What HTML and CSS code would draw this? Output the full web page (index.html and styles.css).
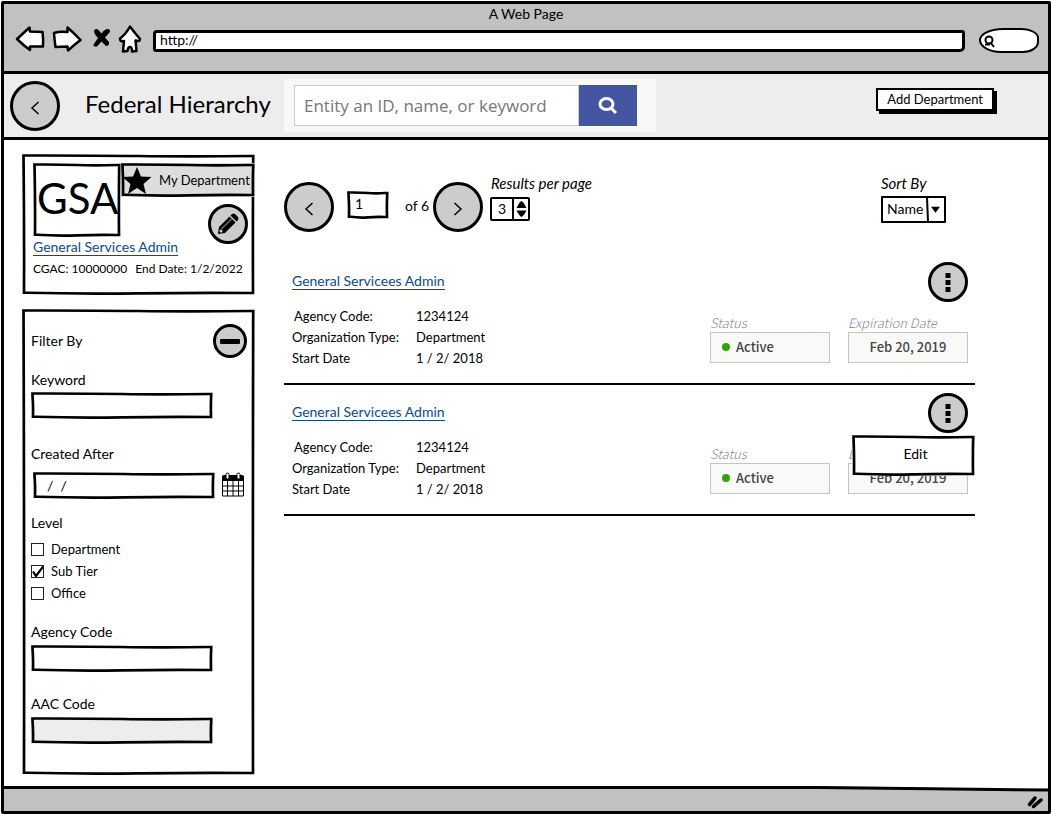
FILE: index.html
```html
<!DOCTYPE html>
<html lang="en">
<head>
<meta charset="utf-8">
<title>Federal Hierarchy</title>
<link rel="stylesheet" href="styles.css">
</head>
<body>
<div class="window">
  <div class="chrome">
    <div class="chrome-title">A Web Page</div>
    <div class="toolbar">
      <div class="nav-icons">
        <button type="button" class="plain" aria-label="Back"><svg width="30" height="28" viewBox="0 0 30 28"><path d="M2 14 14.500 2.500 15 6.500 27.500 7Q28.500 14 28 21.500L15 21.500 15 25Q8 20 2 14Z" class="ink-outline"/></svg></button>
        <button type="button" class="plain" aria-label="Forward"><svg width="30" height="28" viewBox="0 0 30 28"><path d="M2 8Q8 6 15.500 7L15.500 2.500Q22 8 28.500 15Q22 20 16 25.500L15.500 21.500 3.500 22Q2.500 15 2 8Z" class="ink-outline"/></svg></button>
        <button type="button" class="plain stop" aria-label="Stop"><svg width="18" height="22" viewBox="0 0 18 22"><path d="M1 3Q2 0 5 1.500L8.500 5.500Q11.500 1 15 1Q18 1.500 16.500 4.500L12 9.500 16 14Q16.500 18 13 18L8.500 13.500 4 18.500Q0 19 .5 16.500L5 10Q1 6 1 3Z"/></svg></button>
        <button type="button" class="plain" aria-label="Home"><svg width="24" height="30" viewBox="0 0 24 30"><path d="M12 2.500Q16 8 22 15Q22 18 17.500 16.500L18.500 27 14 27.500Q14 23 12 23T9.500 27L5 27.500 6 17Q2 18 2 14.500Q8 10 12 2.500Z" class="ink-outline"/></svg></button>
      </div>
      <input class="address" type="text" value="http://" aria-label="Address">
      <label class="quick-search">
        <svg width="13" height="14" viewBox="0 0 13 14"><circle cx="6" cy="6" r="3.500" class="ink-line"/><path d="M7.500 8.500 11 13M2 10.500H7" class="ink-line"/></svg>
        <input type="text" aria-label="Browser search">
      </label>
    </div>
  </div>

  <header class="header">
    <button type="button" class="round large" aria-label="Go back"><svg width="12" height="14" viewBox="0 0 12 14"><path d="M9.500 1 3 7l6.500 6" class="chevron"/></svg></button>
    <h1>Federal Hierarchy</h1>
    <form class="search-panel">
      <input type="search" placeholder="Entity an ID, name, or keyword" aria-label="Search entities">
      <button type="button" aria-label="Search"><svg width="22" height="18" viewBox="0 0 22 18"><ellipse cx="9.500" cy="7" rx="6.500" ry="5.500"/><path d="m14 11 5 5"/></svg></button>
    </form>
    <button type="button" class="add-button">Add Department</button>
  </header>

  <main class="content">
    <aside class="sidebar">
      <section class="sketch org-card">
        <div class="org-top">
          <div>
            <div class="sketch logo">GSA</div>
            <a href="#" class="link">General Services Admin</a>
          </div>
          <div class="org-side">
            <div class="sketch my-dept"><svg width="30" height="29" viewBox="0 0 30 29"><path d="m15 1 4 9.500 10.500.5-8 7L24 28l-9-6-9 6 2.500-10-8-7L11 10.500Z"/></svg>My Department</div>
            <button type="button" class="round medium" aria-label="Edit department"><svg width="22" height="22" viewBox="0 0 22 22"><path d="m1 21 1-7L12.500 3.500l6 6L8 20Z"/><path d="m13.500 2.500 1.500-1.500q1.500-1 3 0L21 4q1 1.500 0 3l-1.500 1.500Z"/><path d="m4.500 16 10-10" class="pencil-cut"/><circle cx="4" cy="18" r="1.500" fill="#ccc"/></svg></button>
          </div>
        </div>
        <p class="org-meta"><span>CGAC: 10000000</span><span>End Date: 1/2/2022</span></p>
      </section>

      <form class="sketch filters">
        <div class="filter-head">
          <h2>Filter By</h2>
          <button type="button" class="round small" aria-label="Collapse filters"><span class="minus"></span></button>
        </div>
        <div class="field">
          <label for="keyword">Keyword</label>
          <input class="sketch" id="keyword" type="text">
        </div>
        <div class="field date-field">
          <label for="created">Created After</label>
          <div class="date-row">
            <input class="sketch" id="created" type="text" value="/  /">
            <svg width="24" height="25" viewBox="0 0 24 25"><path d="M1 4.500Q1 3 3 3h18q2 0 2 1.500V9H1Z"/><path d="M1.500 8v16h21V8M1.500 14h21M1.500 19h21M6.500 9v15M12 9v15M17.500 9v15" fill="none" stroke="#000"/><rect x="5" y="1" width="3" height="6" rx="1.500" fill="#fff" stroke="#000"/><rect x="16" y="1" width="3" height="6" rx="1.500" fill="#fff" stroke="#000"/></svg>
          </div>
        </div>
        <fieldset>
          <legend>Level</legend>
          <label><input type="checkbox">Department</label>
          <label><input type="checkbox" checked>Sub Tier</label>
          <label><input type="checkbox">Office</label>
        </fieldset>
        <div class="field">
          <label for="agency">Agency Code</label>
          <input class="sketch" id="agency" type="text">
        </div>
        <div class="field">
          <label for="aac">AAC Code</label>
          <input class="sketch" id="aac" type="text" disabled>
        </div>
      </form>
    </aside>

    <section class="results">
      <div class="controls">
        <button type="button" class="round large" aria-label="Previous page"><svg width="12" height="14" viewBox="0 0 12 14"><path d="M9.500 1 3 7l6.500 6" class="chevron"/></svg></button>
        <input class="sketch page-input" type="text" value="1" aria-label="Page">
        <span class="page-total">of 6</span>
        <button type="button" class="round large" aria-label="Next page"><svg width="12" height="14" viewBox="0 0 12 14"><path d="m2.500 1 6.500 6-6.500 6" class="chevron"/></svg></button>
        <div class="option">
          <label for="per-page">Results per page</label>
          <div class="stepper">
            <input id="per-page" type="number" value="3">
            <svg width="13" height="18" viewBox="0 0 13 18"><path d="M1.500 8Q5 1 6.500 1T11.500 8ZM1.500 10.500h10Q8 17 6.500 17T1.500 10.500Z"/></svg>
          </div>
        </div>
        <div class="option sort">
          <label for="sort">Sort By</label>
          <div class="picker">
            <select id="sort"><option>Name</option></select>
          </div>
        </div>
      </div>

      <article class="item">
        <div class="item-main">
          <a href="#" class="link">General Servicees Admin</a>
          <dl>
            <dt class="nudge">Agency Code:</dt><dd>1234124</dd>
            <dt>Organization Type:</dt><dd>Department</dd>
            <dt>Start Date</dt><dd>1 / 2/ 2018</dd>
          </dl>
        </div>
        <div class="item-side">
          <button type="button" class="round medium" aria-label="More actions"><svg width="6" height="20" viewBox="0 0 6 20"><path d="M.5 1h5v5h-5ZM.5 8h5v5h-5ZM.5 15h5v5h-5Z"/></svg></button>
          <div class="facts">
            <div><span class="fact-label">Status</span><div class="fact"><i class="dot"></i>Active</div></div>
            <div><span class="fact-label">Expiration Date</span><div class="fact center">Feb 20, 2019</div></div>
          </div>
        </div>
      </article>

      <article class="item">
        <div class="item-main">
          <a href="#" class="link">General Servicees Admin</a>
          <dl>
            <dt class="nudge">Agency Code:</dt><dd>1234124</dd>
            <dt>Organization Type:</dt><dd>Department</dd>
            <dt>Start Date</dt><dd>1 / 2/ 2018</dd>
          </dl>
        </div>
        <div class="item-side">
          <button type="button" class="round medium" aria-label="More actions"><svg width="6" height="20" viewBox="0 0 6 20"><path d="M.5 1h5v5h-5ZM.5 8h5v5h-5ZM.5 15h5v5h-5Z"/></svg></button>
          <div class="facts">
            <div><span class="fact-label">Status</span><div class="fact"><i class="dot"></i>Active</div></div>
            <div><span class="fact-label">Expiration Date</span><div class="fact center">Feb 20, 2019</div></div>
          </div>
          <button type="button" class="sketch menu">Edit</button>
        </div>
      </article>
    </section>
  </main>

  <footer class="status-bar">
    <svg class="slope" viewBox="0 0 1000 6" preserveAspectRatio="none"><path d="M0 0H780L1000 3.500V0Z" fill="#fff"/><path d="M0 0 780 0 1000 2.500V5.500L780 3H0Z"/></svg>
    <svg class="grip" width="18" height="14" viewBox="0 0 18 14"><path d="M2.500 9.500 8 3M6.500 11.500 14 5" stroke="#000" stroke-width="3.500" stroke-linecap="round"/></svg>
  </footer>
</div>
</body>
</html>
```
FILE: styles.css
```css
* { box-sizing: border-box; }

body {
  margin: 0;
  background: #fff;
  color: #000;
  font: 14px/20px Lato, "Liberation Sans", sans-serif;
}

button, input, select { font: inherit; color: inherit; }
button { cursor: pointer; }
h1, h2, p, dl, dd { margin: 0; }
svg { display: block; }

.window {
  display: flex;
  flex-direction: column;
  min-height: calc(100vh - 2px);
  margin: 1px;
  border: 3px solid #000;
  border-radius: 2px;
}

.sketch {
  border: 4px solid #000;
  border-image: url("data:image/svg+xml,%3Csvg xmlns='http://www.w3.org/2000/svg' width='200' height='100'%3E%3Cpath d='M1.5 1.5 Q60 1.4 100 2 T198.2 2 Q197.700 50 198 98 Q150 97.600 100 98.300 T2 97.700 Q2.300 50 1.500 1.500Z' fill='none' stroke='black' stroke-width='2.7'/%3E%3C/svg%3E") 4 stretch;
}

/* Browser chrome */
.chrome { background: #c1c1c1; border-bottom: 3px solid #000; padding-bottom: 16px; }
.chrome-title { text-align: center; line-height: 19px; }
.toolbar { display: flex; align-items: center; height: 32px; padding: 0 9px 0 11px; }
.nav-icons { display: flex; align-items: center; gap: 7px; margin-right: 11px; }
.plain { padding: 0; border: 0; background: none; }
.stop { margin: 0 0 0 4px; }
.ink-outline { fill: #fff; stroke: #000; stroke-width: 2.5; stroke-linejoin: round; }
.ink-line { fill: none; stroke: #000; stroke-width: 2; }
.address {
  flex: 1;
  min-width: 0;
  height: 22px;
  margin-top: 4px;
  padding: 0 4px 3px;
  border: 3px solid #000;
  border-radius: 4px 3px 5px 3px;
  background: #fff;
}
.quick-search {
  display: flex;
  align-items: center;
  width: 60px;
  height: 25px;
  margin: 3px 0 0 14px;
  padding-left: 2px;
  border: 2px solid #000;
  border-radius: 24px 18px 16px 22px / 12px 10px 11px 13px;
  background: #fff;
}
.quick-search input { width: 36px; padding: 0; border: 0; background: none; }

/* Page header */
.header {
  display: flex;
  align-items: center;
  height: 66px;
  padding-left: 6px;
  background: #ededed;
  border-bottom: 3px solid #000;
}
.round {
  display: grid;
  flex: none;
  place-items: center;
  padding: 0;
  border: 3px solid #000;
  border-radius: 50%;
  background: #ccc;
}
.large { width: 50px; height: 50px; padding-top: 4px; }
.medium { width: 40px; height: 40px; }
.small { width: 34px; height: 34px; }
.chevron { fill: none; stroke: #000; stroke-width: 1.5; }
.minus { width: 20px; height: 5px; border-radius: 1px; background: #000; }

.header h1 { width: 199px; margin-left: 25px; padding-bottom: 4px; font-size: 24px; font-weight: 400; line-height: 28px; white-space: nowrap; }
.search-panel { display: flex; width: 372px; padding: 6px 19px 6px 10px; background: #f8f8f6; }
.search-panel input {
  flex: 1;
  min-width: 0;
  height: 41px;
  padding: 0 9px;
  border: 1px solid #ccccc4;
  border-radius: 0;
  background: #fff;
  font: 17px/20px "Open Sans", "Noto Sans", sans-serif;
}
.search-panel input::placeholder { color: #777; opacity: 1; }
.search-panel button { display: grid; place-items: center; width: 58px; border: 0; background: #4456a1; }
.search-panel svg { fill: none; stroke: #fff; stroke-width: 3; }
.add-button {
  height: 23px;
  margin: 0 54px 12px auto;
  padding: 0 9px;
  border: 2px solid #000;
  background: #fff;
  box-shadow: 3px 3px 0 #000;
  font-size: 13px;
  line-height: 19px;
}

/* Two columns */
.content {
  display: grid;
  flex: 1;
  grid-template-columns: 233px minmax(0, 1fr);
  align-items: start;
  gap: 29px;
  padding: 14px 73px 11px 18px;
}
.sidebar { display: grid; grid-template-columns: minmax(0, 1fr); gap: 14px; }
.link { color: #0e4a8b; line-height: 17px; text-decoration: none; border-bottom: 1px solid #0e4a8b; white-space: nowrap; }

.org-card { height: 141px; padding: 5px 0 0 7px; }
.org-top { display: grid; grid-template-columns: 88px minmax(0, 1fr); }
.logo { display: grid; place-items: center; height: 74px; padding-bottom: 5px; font-size: 42px; }
.org-side { display: grid; justify-items: end; align-content: start; gap: 7px; }
.my-dept { display: flex; align-items: center; justify-self: stretch; gap: 7px; height: 34px; margin-right: -4px; background: #ddd; font-size: 13px; white-space: nowrap; }
.my-dept svg { flex: none; margin-left: -3px; }
.org-side .round { margin-right: 3px; }
.pencil-cut { fill: none; stroke: #ccc; stroke-width: 1; }
.org-meta { display: flex; gap: 8px; margin-top: 2px; font-size: 12px; white-space: nowrap; }

.filters { min-height: 466px; padding: 11px 4px 0 5px; }
.filter-head { display: flex; align-items: center; justify-content: space-between; }
.filter-head h2 { font-size: 14px; font-weight: 400; }
.field { margin-top: 12px; }
.field label { display: block; }
.field input { display: block; width: 182px; height: 27px; margin-top: 2px; padding: 0 10px; background: #fff; white-space: pre; }
.field input:disabled { background: #ededed; }
.date-field { margin-top: 25px; }
.date-row { display: flex; align-items: center; gap: 6px; padding: 6px 0 0 2px; }
.filters fieldset { display: grid; margin: 14px 0 0; padding: 0; border: 0; }
.filters legend { padding: 0 0 5px; }
.filters fieldset label { display: flex; align-items: center; gap: 7px; height: 22px; font-size: 13px; }
.filters fieldset input { appearance: none; width: 13px; height: 13px; margin: 0; border: 1px solid #222; background: #fff; }
.filters fieldset input:checked {
  background: url("data:image/svg+xml,%3Csvg xmlns='http://www.w3.org/2000/svg' width='13' height='13'%3E%3Cpath d='M2 6.500 5 11 12.500 1' fill='none' stroke='black' stroke-width='2.2'/%3E%3C/svg%3E") center no-repeat;
}
.filters fieldset + .field { margin-top: 18px; }
.filters fieldset ~ .field input { margin-top: 3px; }
.filters .field:last-child { margin-top: 22px; }

/* Results */
.results { min-width: 0; }
.controls { display: flex; height: 100px; padding-top: 28px; }
.page-input { width: 42px; height: 28px; margin: 9px 16px 0 13px; padding: 0 4px 3px; }
.page-total { width: 28px; margin-top: 14px; }
.option { margin-left: 7px; }
.option label { display: block; margin: -9px 0 4px 1px; font-size: 15px; font-style: italic; }
.sort { margin: 0 29px 0 auto; }
.option.sort label { margin: -9px 0 3px; }
.stepper { display: flex; align-items: center; width: 40px; height: 24px; border: 2px solid #000; border-radius: 2px; }
.stepper input { width: 22px; height: 20px; padding: 0; border: 0; border-right: 2px solid #000; background: #fff; text-align: center; appearance: textfield; }
.stepper svg { margin-left: 1px; }
.stepper input::-webkit-inner-spin-button { appearance: none; margin: 0; }
.picker select {
  appearance: none;
  display: block;
  width: 65px;
  height: 27px;
  padding: 0 20px 2px 4px;
  border: 2px solid #000;
  border-radius: 1px;
  background: #fff url("data:image/svg+xml,%3Csvg xmlns='http://www.w3.org/2000/svg' width='18' height='24'%3E%3Cpath d='M1 0 2 24' stroke='black' stroke-width='2'/%3E%3Cpath d='M5 9h9l-4.500 6Z'/%3E%3C/svg%3E") right center no-repeat;
}

.item { display: flex; justify-content: space-between; height: 131px; padding: 8px 7px 0 8px; border-bottom: 2px solid #000; }
.item-main { padding-top: 9px; }
.item dl { display: grid; grid-template-columns: 124px 1fr; margin-top: 15px; font-size: 13px; line-height: 21px; white-space: nowrap; }
.nudge { padding-left: 2px; }
.item-side { display: flex; flex-direction: column; align-items: flex-end; position: relative; }
.facts { display: flex; gap: 18px; margin-top: 12px; font-family: "Noto Sans CJK SC", sans-serif; font-size: 13px; }
.fact-label { display: block; color: #888; font-style: italic; font-weight: 300; line-height: 18px; }
.fact { display: flex; align-items: center; gap: 6px; width: 120px; height: 31px; padding: 0 0 1px 11px; border: 1px solid #c4c5bb; background: #f9f9f8; color: #444; font-weight: 500; }
.fact.center { justify-content: center; padding-left: 0; }
.dot { width: 8px; height: 8px; border-radius: 50%; background: #2ea500; }
.menu { position: absolute; top: 42px; right: -7px; width: 123px; height: 41px; padding: 0 0 4px 4px; background: #fff; }

.status-bar { position: relative; height: 25px; background: #c1c1c1; }
.slope { width: 100%; height: 6px; }
.grip { margin: 3px 3px 0 auto; }
```
